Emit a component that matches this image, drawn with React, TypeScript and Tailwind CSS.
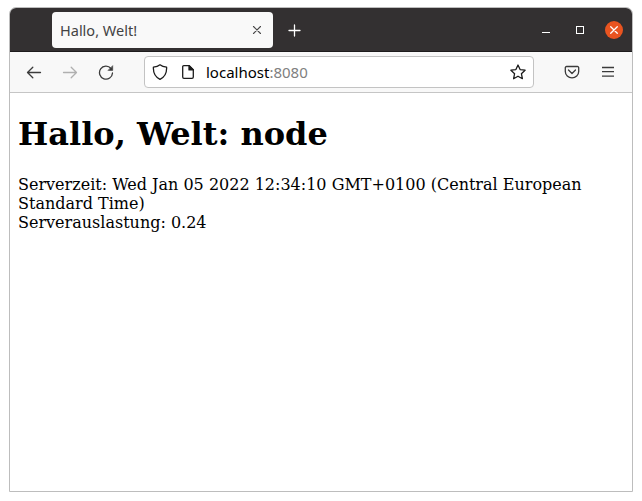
import type { ReactNode } from "react";

function Icon({ children, className = "" }: { children: ReactNode; className?: string }) {
  return (
    <svg
      viewBox="0 0 16 16"
      className={`size-4 shrink-0 ${className}`}
      fill="none"
      stroke="currentColor"
      strokeWidth="1.3"
      strokeLinecap="round"
      strokeLinejoin="round"
    >
      {children}
    </svg>
  );
}

function ToolButton({ children, label }: { children: ReactNode; label: string }) {
  return (
    <button aria-label={label} className="flex h-8 w-9 shrink-0 items-center justify-center">
      {children}
    </button>
  );
}

function TitleBar() {
  return (
    <header className="flex h-11 shrink-0 border-b border-[#1d1b1c] bg-[#333031] pt-1 pl-[42px] text-white">
      <div className="flex h-9 w-[221px] items-center justify-between rounded-[4px] bg-[#f9f9f9] pr-2 pl-2 text-[#434243]">
        <span className="text-[14.5px] leading-9">Hallo, Welt!</span>
        <Icon className="text-[#4a494a]">
          <path d="M4.5 4.5l7 7M11.5 4.5l-7 7" strokeWidth="1.1" />
        </Icon>
      </div>
      <button aria-label="Neuer Tab" className="ml-[13px] flex h-9 w-4 items-center justify-center">
        <Icon>
          <path d="M8.5 3v11M3 8.5h11" />
        </Icon>
      </button>
      <div className="ml-auto flex h-9 items-center gap-[18px] pr-[9px]">
        <Icon>
          <path d="M4 10.5h8" strokeWidth="1" strokeLinecap="butt" />
        </Icon>
        <Icon>
          <rect x="4.5" y="4.5" width="7" height="7" strokeWidth="1" strokeLinejoin="miter" />
        </Icon>
        <span className="-ml-[1px] flex size-[18px] items-center justify-center rounded-full bg-[#e95420]">
          <Icon>
            <path d="M4.7 4.7l6.6 6.6M11.3 4.7l-6.6 6.6" />
          </Icon>
        </span>
      </div>
    </header>
  );
}

function ToolBar() {
  return (
    <nav className="flex h-[41px] shrink-0 items-center border-b border-[#c5c5c5] bg-[#f8f8f8] pr-1.5 pl-1.5 text-[#3b3b3b]">
      <ToolButton label="Zurück">
        <Icon>
          <path d="M14.5 8.5H1.7M6.800 3.200L1.500 8.500l5.300 5.300" />
        </Icon>
      </ToolButton>
      <ToolButton label="Vor">
        <Icon className="text-[#b0b0b0]">
          <path d="M1.500 8.500h12.800M9.200 3.200l5.300 5.300-5.300 5.300" />
        </Icon>
      </ToolButton>
      <ToolButton label="Neu laden">
        <Icon>
          <path d="M13 4.500A6.500 6.500 0 1 0 14.500 9" />
          <path d="M14.700 2v4.400h-4.400z" fill="currentColor" strokeWidth="0.6" />
        </Icon>
      </ToolButton>
      <div className="ml-5 flex h-8 w-[390px] items-center rounded-[4px] border border-[#c3c3c3] bg-white px-[7px] text-[#1c1c1c]">
        <Icon>
          <path d="M8 .8c2 1.600 4.300 2.100 6.600 2.300.3 5-1.500 9.800-6.600 12.200C2.900 12.900 1.100 8.100 1.400 3.100 3.700 2.900 6 2.400 8 .8z" />
        </Icon>
        <Icon className="ml-3">
          <path d="M3.700 1.700h5.600l4 4v7.400a1.300 1.300 0 0 1-1.300 1.300H4a1.300 1.300 0 0 1-1.300-1.300V2.700a1 1 0 0 1 1-1z" />
          <path d="M9 1.700v4.200h4.300z" fill="currentColor" />
        </Icon>
        <span className="ml-[10px] text-[15px] leading-[30px] text-black">
          localhost<span className="text-[#808080]">:8080</span>
        </span>
        <Icon className="ml-auto">
          <path d="M8 1l2.100 4.600 5 .6-3.700 3.500 1 5L8 12.200l-4.400 2.500 1-5L.9 6.200l5-.6z" />
        </Icon>
      </div>
      <div className="ml-auto flex">
        <ToolButton label="Pocket">
          <Icon>
            <path d="M2.500 2.500h11a1.200 1.200 0 0 1 1.200 1.200V7.500a6.700 6.400 0 0 1-13.400 0V3.700a1.200 1.200 0 0 1 1.200-1.200z" />
            <path d="M4.500 6L8 9.500L11.500 6" />
          </Icon>
        </ToolButton>
        <ToolButton label="Menü">
          <Icon>
            <path d="M2 3.500h12M2 7.700h12M2 12.200h12" strokeLinecap="butt" />
          </Icon>
        </ToolButton>
      </div>
    </nav>
  );
}

export default function App() {
  return (
    <div className="h-[501px] w-[642px] bg-white pt-[7px] pl-[9px] font-['Noto_Sans','Open_Sans',sans-serif]">
      <div className="flex h-[485px] w-[624px] flex-col overflow-hidden rounded-t-[7px] border border-[#bdbdbd] bg-white">
        <TitleBar />
        <ToolBar />
        <main className="px-2 pt-[23px] font-['DejaVu_Serif',serif] text-black">
          <h1 className="text-[32px] leading-[37px] font-bold">Hallo, Welt: node</h1>
          <p className="mt-[22px] text-[16px] leading-[19px]">
            Serverzeit: Wed Jan 05 2022 12:34:10 GMT+0100 (Central European
            <br />
            Standard Time)
            <br />
            Serverauslastung: 0.24
          </p>
        </main>
      </div>
    </div>
  );
}
